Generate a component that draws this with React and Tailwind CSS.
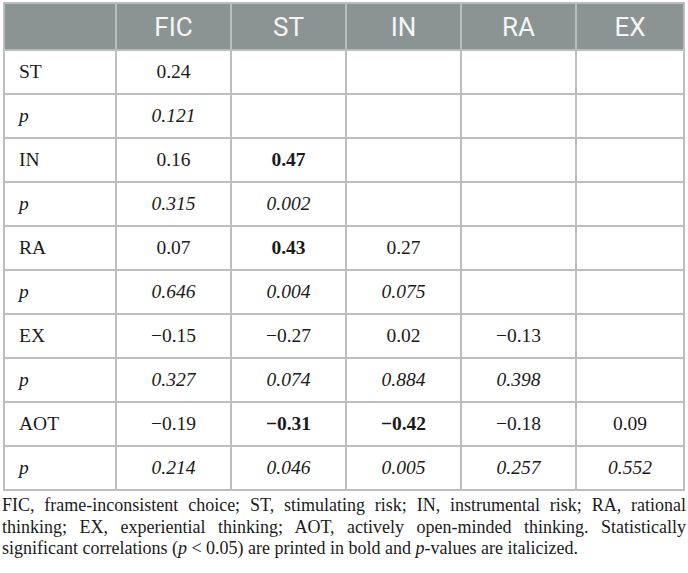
import React from "react";

const rows = [
  { label: "ST", cells: ["0.24", "", "", "", ""] },
  { label: "p", p: true, cells: ["0.121", "", "", "", ""] },
  { label: "IN", cells: ["0.16", "*0.47", "", "", ""] },
  { label: "p", p: true, cells: ["0.315", "0.002", "", "", ""] },
  { label: "RA", cells: ["0.07", "*0.43", "0.27", "", ""] },
  { label: "p", p: true, cells: ["0.646", "0.004", "0.075", "", ""] },
  { label: "EX", cells: ["\u22120.15", "\u22120.27", "0.02", "\u22120.13", ""] },
  { label: "p", p: true, cells: ["0.327", "0.074", "0.884", "0.398", ""] },
  { label: "AOT", cells: ["\u22120.19", "*\u22120.31", "*\u22120.42", "\u22120.18", "0.09"] },
  { label: "p", p: true, cells: ["0.214", "0.046", "0.005", "0.257", "0.552"] },
];

const heads = ["FIC", "ST", "IN", "RA", "EX"];

export default function App() {
  return (
    <div className="w-[688px] h-[573px] bg-white overflow-hidden pt-[2px] px-[3px]">
      <table className="w-[682px] border-collapse table-fixed border-2 border-[#c3cbc6]">
        <colgroup>
          <col className="w-[112px]" />
          <col className="w-[115px]" />
          <col className="w-[115px]" />
          <col className="w-[115px]" />
          <col className="w-[115px]" />
          <col />
        </colgroup>
        <thead>
          <tr className="h-[47px] bg-[#8c9393]">
            <th className="border-2 border-[#b9bdbd]"></th>
            {heads.map((h) => (
              <th
                key={h}
                className="border-2 border-[#b9bdbd] text-[#f4f5f5] font-normal text-[26px] leading-none text-center font-['Roboto',sans-serif]"
              >
                {h}
              </th>
            ))}
          </tr>
        </thead>
        <tbody className="font-['Liberation_Serif',serif] text-[19.5px] text-[#1a1a1a]">
          {rows.map((r, i) => (
            <tr key={i} className="h-[44px]">
              <td className={`border-2 border-[#bdbdbd] pl-[14px] ${r.p ? "italic" : ""}`}>{r.label}</td>
              {r.cells.map((c, j) => {
                const bold = c.startsWith("*");
                const t = bold ? c.slice(1) : c;
                return (
                  <td
                    key={j}
                    className={`border-2 border-[#bdbdbd] text-center ${r.p ? "italic" : ""} ${bold ? "font-bold" : ""}`}
                  >
                    {t}
                  </td>
                );
              })}
            </tr>
          ))}
        </tbody>
      </table>
      <p className="mt-[4px] font-['Liberation_Serif',serif] text-[18px] leading-[21.5px] text-[#1a1a1a] text-justify w-[684px] -ml-[1px]">
        FIC, frame-inconsistent choice; ST, stimulating risk; IN, instrumental risk; RA, rational thinking; EX, experiential thinking; AOT, actively open-minded thinking. Statistically significant correlations (<i>p</i> &lt; 0.05) are printed in bold and <i>p</i>-values are italicized.
      </p>
    </div>
  );
}
